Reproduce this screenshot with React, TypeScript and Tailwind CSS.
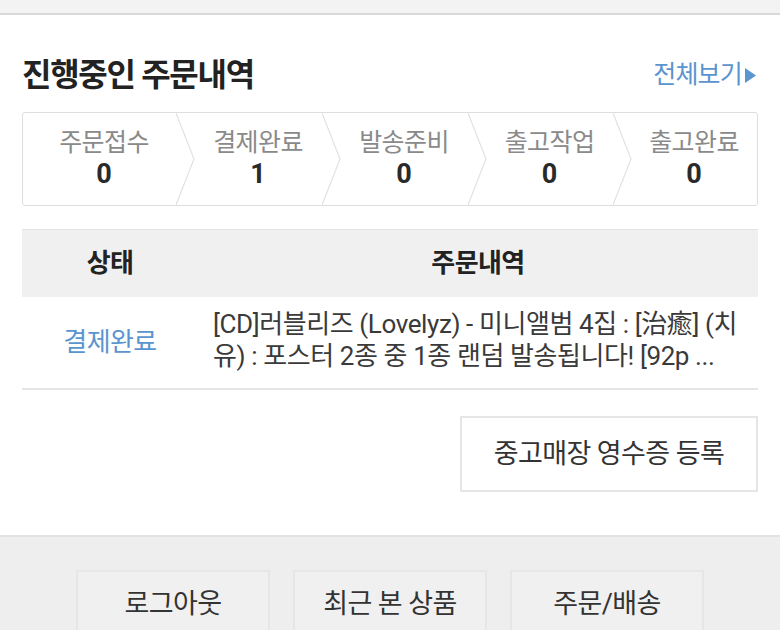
import React from "react";

const FONT = { fontFamily: "Roboto, 'Noto Sans CJK KR', sans-serif" };

const steps = [
  { label: "주문접수", count: 0 },
  { label: "결제완료", count: 1 },
  { label: "발송준비", count: 0 },
  { label: "출고작업", count: 0 },
  { label: "출고완료", count: 0 },
];

function Chevron() {
  return (
    <svg
      className="absolute left-0 top-0 h-full w-[20px]"
      viewBox="0 0 20 92"
      preserveAspectRatio="none"
    >
      <polyline points="0,0 18,46 0,92" fill="none" stroke="#e2e2e2" strokeWidth="1.2" />
    </svg>
  );
}

export default function App() {
  return (
    <div className="w-[780px] h-[630px] overflow-hidden bg-white" style={FONT}>
      <div className="h-[15px] bg-[#f3f3f3] border-b-2 border-[#d9d9d9]" />
      <div className="px-[22px] pb-[43px]">
        <div className="flex items-center justify-between h-[97px] pt-[23px]">
          <h2 className="text-[32px] font-bold text-[#222] tracking-[-1.3px]">진행중인 주문내역</h2>
          <a className="flex items-center text-[25px] text-[#5b95cf] tracking-[-0.8px] mr-[2px]">
            전체보기
            <svg width="11" height="15" viewBox="0 0 11 15" className="ml-[3px]">
              <polygon points="0,0 11,7.5 0,15" fill="#5b95cf" />
            </svg>
          </a>
        </div>
        <div className="grid grid-cols-[153px_146px_146px_145px_1fr] h-[94px] border border-[#dedede] rounded-[3px]">
          {steps.map((s, i) => (
            <div
              key={s.label}
              className={`relative flex flex-col items-center justify-center ${i === 0 ? "pl-[9px]" : "pl-[18px]"}`}
            >
              {i > 0 && <Chevron />}
              <span className="text-[25px] leading-[30px] text-[#8a8a8a] tracking-[-0.6px]">{s.label}</span>
              <span className="text-[27px] leading-[32px] font-bold text-[#2a2a2a]">{s.count}</span>
            </div>
          ))}
        </div>
        <div className="mt-[23px] border-t border-[#e3e3e3]">
          <div className="flex h-[67px] items-center bg-[#f0f0f0] text-[26px] font-bold text-[#222] tracking-[-0.6px]">
            <div className="w-[176px] text-center">상태</div>
            <div className="flex-1 text-center">주문내역</div>
          </div>
          <div className="flex h-[93px] items-center border-b-2 border-[#e5e5e5]">
            <div className="w-[176px] text-center text-[26px] text-[#5b95cf] tracking-[-0.6px]">결제완료</div>
            <div className="flex-1 pl-[15px] pr-[4px] pb-[6px] text-[26px] leading-[32px] text-[#3a3a3a] tracking-[-0.4px]">
              [CD]러블리즈 (Lovelyz) - 미니앨범 4집 : [治癒] (치유) : 포스터 2종 중 1종 랜덤 발송됩니다! [92p ...
            </div>
          </div>
        </div>
        <div className="flex justify-end mt-[26px]">
          <button className="w-[298px] h-[76px] border-2 border-[#e6e6e6] bg-white text-[27px] text-[#333] tracking-[-0.6px]">
            중고매장 영수증 등록
          </button>
        </div>
      </div>
      <div className="bg-[#eeeeee] border-t-2 border-[#e2e2e2] pt-[33px] flex justify-center gap-[23px]">
        {["로그아웃", "최근 본 상품", "주문/배송"].map((t) => (
          <button
            key={t}
            className="w-[194px] h-[70px] border-2 border-[#e6e6e6] bg-[#f0f0f0] text-[27px] text-[#333] tracking-[-0.6px] pb-[2px]"
          >
            {t}
          </button>
        ))}
      </div>
    </div>
  );
}
